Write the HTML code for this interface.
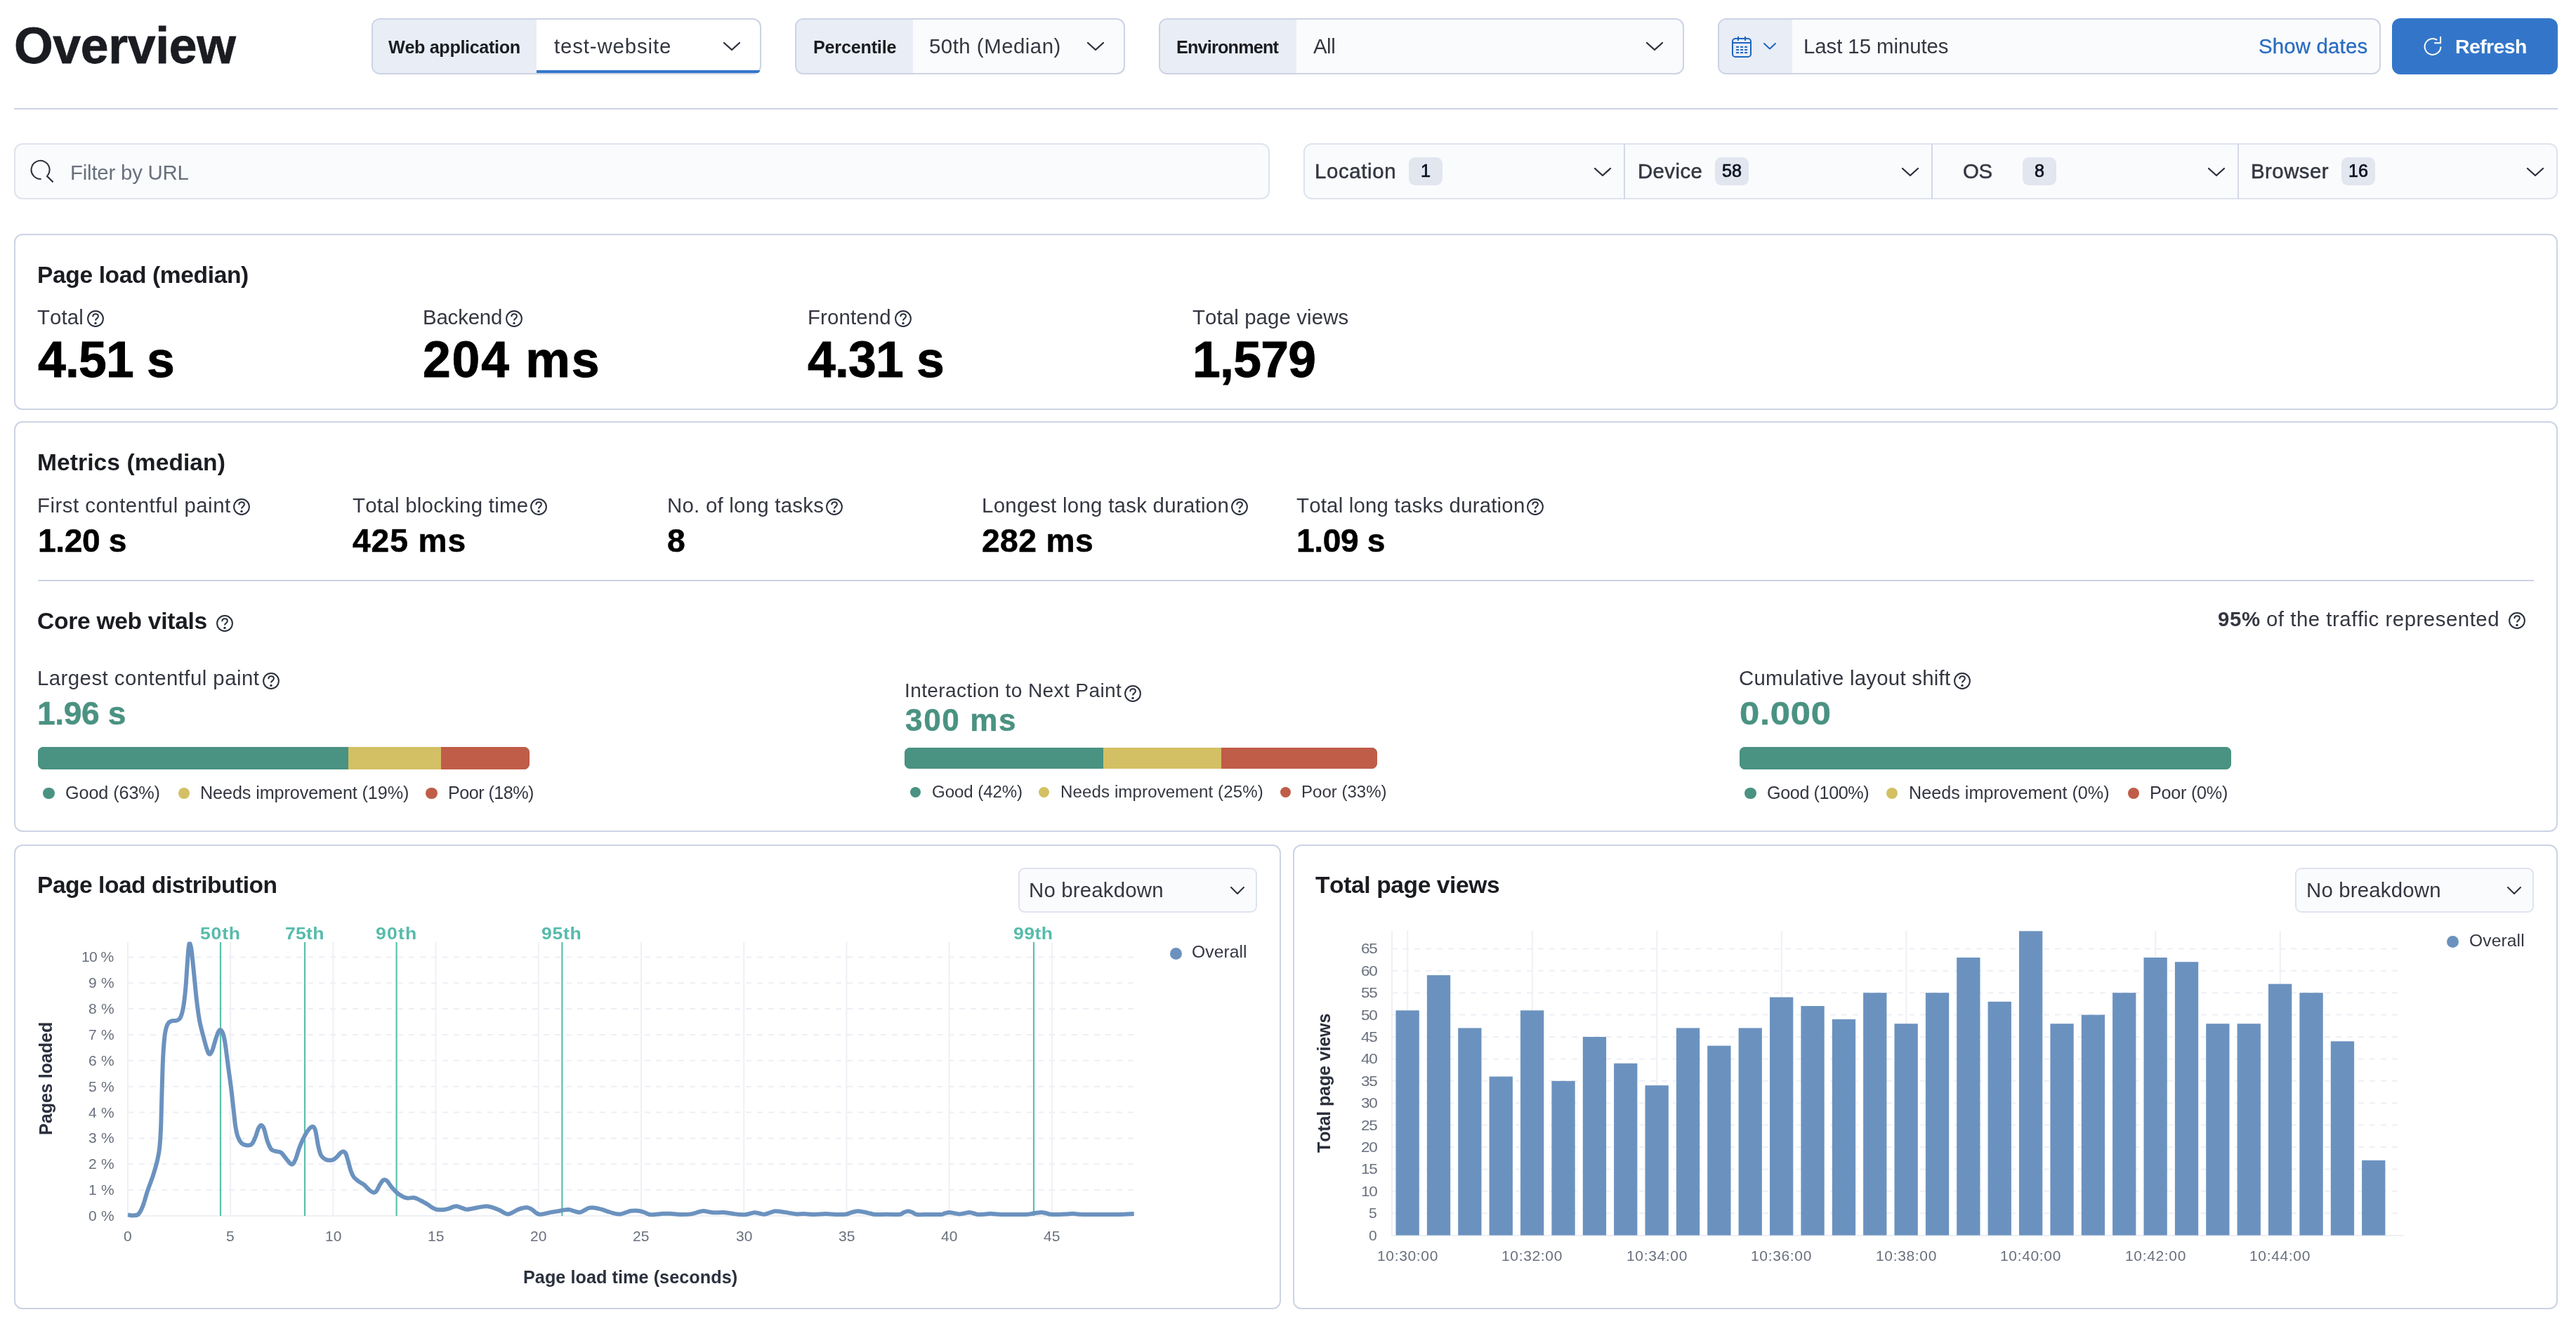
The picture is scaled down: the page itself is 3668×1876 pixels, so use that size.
<!DOCTYPE html>
<html><head><meta charset="utf-8"><title>Overview</title>
<style>
html,body{margin:0;padding:0;background:#fff;}
body{width:3668px;height:1876px;position:relative;overflow:hidden;font-family:"Liberation Sans",sans-serif;}
.t{position:absolute;white-space:nowrap;line-height:1;font-kerning:none;will-change:transform;}
.b{position:absolute;box-sizing:border-box;}
</style></head><body>
<div class="t" style="left:19.8px;top:29.5px;font-size:71.5px;color:#1a1c21;font-weight:700;letter-spacing:-0.29px;-webkit-text-stroke:0.8px #1a1c21;">Overview</div>
<div class="b" style="left:529px;top:26px;width:555px;height:80px;background:#fff;border:2px solid #ccd3e5;border-radius:12px;"></div>
<div class="b" style="left:531px;top:28px;width:233px;height:76px;background:#e9edf6;border-radius:10px 0 0 10px;"></div>
<div class="t" style="left:552.8px;top:54.7px;font-size:25.2px;color:#1a1c21;font-weight:700;letter-spacing:-0.36px;">Web application</div>
<div class="t" style="left:788.8px;top:51.1px;font-size:29.4px;color:#343741;letter-spacing:0.87px;">test-website</div>
<svg class="b" style="left:1028px;top:58px;" width="28" height="16" viewBox="0 0 28 16"><path d="M3 3 L14 13 L25 3" fill="none" stroke="#2b2f3b" stroke-width="2.3" stroke-linecap="round" stroke-linejoin="round"/></svg>
<div class="b" style="left:764px;top:100px;width:318px;height:4px;background:#3376c9;border-radius:0 0 10px 0;"></div>
<div class="b" style="left:1132px;top:26px;width:470px;height:80px;background:#fafbfd;border:2px solid #ccd3e5;border-radius:12px;"></div>
<div class="b" style="left:1134px;top:28px;width:166px;height:76px;background:#e9edf6;border-radius:10px 0 0 10px;"></div>
<div class="t" style="left:1157.8px;top:54.7px;font-size:25.2px;color:#1a1c21;font-weight:700;letter-spacing:-0.22px;">Percentile</div>
<div class="t" style="left:1322.8px;top:51.1px;font-size:29.4px;color:#343741;letter-spacing:0.50px;">50th (Median)</div>
<svg class="b" style="left:1546px;top:58px;" width="28" height="16" viewBox="0 0 28 16"><path d="M3 3 L14 13 L25 3" fill="none" stroke="#2b2f3b" stroke-width="2.3" stroke-linecap="round" stroke-linejoin="round"/></svg>
<div class="b" style="left:1650px;top:26px;width:748px;height:80px;background:#fafbfd;border:2px solid #ccd3e5;border-radius:12px;"></div>
<div class="b" style="left:1652px;top:28px;width:194px;height:76px;background:#e9edf6;border-radius:10px 0 0 10px;"></div>
<div class="t" style="left:1674.8px;top:54.7px;font-size:25.2px;color:#1a1c21;font-weight:700;letter-spacing:-0.80px;">Environment</div>
<div class="t" style="left:1869.8px;top:51.1px;font-size:29.4px;color:#343741;letter-spacing:-0.50px;">All</div>
<svg class="b" style="left:2342px;top:58px;" width="28" height="16" viewBox="0 0 28 16"><path d="M3 3 L14 13 L25 3" fill="none" stroke="#2b2f3b" stroke-width="2.3" stroke-linecap="round" stroke-linejoin="round"/></svg>
<div class="b" style="left:2446px;top:26px;width:944px;height:80px;background:#fafbfd;border:2px solid #ccd3e5;border-radius:12px;"></div>
<div class="b" style="left:2448px;top:28px;width:104px;height:76px;background:#e9edf6;border-radius:10px 0 0 10px;"></div>
<svg class="b" style="left:2466px;top:52px;" width="28" height="30" viewBox="0 0 28 30"><rect x="1" y="3" width="26" height="26" rx="4" fill="none" stroke="#1d66bf" stroke-width="2"/><path d="M1 9 H27" stroke="#1d66bf" stroke-width="2"/><path d="M9 0 V6 M19 0 V6" stroke="#1d66bf" stroke-width="2"/><rect x="6.1" y="13.90" width="4" height="2" fill="#1d66bf"/><rect x="12.1" y="13.90" width="4" height="2" fill="#1d66bf"/><rect x="18.1" y="13.90" width="4" height="2" fill="#1d66bf"/><rect x="6.1" y="17.95" width="4" height="2" fill="#1d66bf"/><rect x="12.1" y="17.95" width="4" height="2" fill="#1d66bf"/><rect x="18.1" y="17.95" width="4" height="2" fill="#1d66bf"/><rect x="6.1" y="22.00" width="4" height="2" fill="#1d66bf"/><rect x="12.1" y="22.00" width="4" height="2" fill="#1d66bf"/><rect x="18.1" y="22.00" width="4" height="2" fill="#1d66bf"/></svg>
<svg class="b" style="left:2509px;top:59.3px;" width="22" height="13.4" viewBox="0 0 22 13.4"><path d="M3 3 L11 10.4 L19 3" fill="none" stroke="#1d66bf" stroke-width="2" stroke-linecap="round" stroke-linejoin="round"/></svg>
<div class="t" style="left:2567.8px;top:51.1px;font-size:29.4px;color:#343741;letter-spacing:-0.07px;">Last 15 minutes</div>
<div class="t" style="left:3216.3px;top:51.1px;font-size:29.4px;color:#2a6cc0;letter-spacing:0.17px;-webkit-text-stroke:0.3px #2a6cc0;">Show dates</div>
<div class="b" style="left:3406px;top:26px;width:236px;height:80px;background:#3376c9;border-radius:12px;"></div>
<svg class="b" style="left:3451px;top:52px;" width="28" height="28" viewBox="0 0 28 28"><path d="M24.4 14.5 A11.4 11.4 0 1 1 19.3 5" fill="none" stroke="#fff" stroke-width="2"/><path d="M24.1 0 V9.3 H15.1" fill="none" stroke="#fff" stroke-width="2"/></svg>
<div class="t" style="left:3496.3px;top:51.7px;font-size:28.4px;color:#fff;font-weight:700;letter-spacing:-0.58px;">Refresh</div>
<div class="b" style="left:20px;top:154px;width:3622px;height:2px;background:#ccd3e5;"></div>
<div class="b" style="left:20px;top:204px;width:1788px;height:80px;background:#fafbfd;border:2px solid #dfe3ef;border-radius:12px;"></div>
<svg class="b" style="left:43px;top:227px;" width="36" height="36" viewBox="0 0 36 36"><path d="M15.6 27.9 A13 13 0 1 1 24.6 23.2" fill="none" stroke="#2b2f3b" stroke-width="2"/><path d="M23.3 23.2 L32.6 32.5" fill="none" stroke="#2b2f3b" stroke-width="2.2"/></svg>
<div class="t" style="left:100.3px;top:230.8px;font-size:29.4px;color:#69707d;letter-spacing:-0.21px;">Filter by URL</div>
<div class="b" style="left:1856px;top:204px;width:1786px;height:80px;background:#fafbfd;border:2px solid #dfe3ef;border-radius:12px;"></div>
<div class="b" style="left:2312px;top:204px;width:2px;height:80px;background:#d3d9e8;"></div>
<div class="b" style="left:2750px;top:204px;width:2px;height:80px;background:#d3d9e8;"></div>
<div class="b" style="left:3186px;top:204px;width:2px;height:80px;background:#d3d9e8;"></div>
<div class="t" style="left:1872.4px;top:229.1px;font-size:29.4px;color:#343741;letter-spacing:0.63px;-webkit-text-stroke:0.5px #343741;">Location</div>
<div class="b" style="left:2006px;top:224px;width:48px;height:40px;background:#e1e6ef;border-radius:9px;"></div>
<div class="t" style="left:2022.8px;top:231.1px;font-size:25.2px;color:#07101f;-webkit-text-stroke:0.7px #07101f;">1</div>
<svg class="b" style="left:2268px;top:237px;" width="28" height="16" viewBox="0 0 28 16"><path d="M3 3 L14 13 L25 3" fill="none" stroke="#2b2f3b" stroke-width="2.3" stroke-linecap="round" stroke-linejoin="round"/></svg>
<div class="t" style="left:2332.4px;top:229.1px;font-size:29.4px;color:#343741;letter-spacing:0.40px;-webkit-text-stroke:0.5px #343741;">Device</div>
<div class="b" style="left:2442px;top:224px;width:48px;height:40px;background:#e1e6ef;border-radius:9px;"></div>
<div class="t" style="left:2451.8px;top:231.1px;font-size:25.2px;color:#07101f;-webkit-text-stroke:0.7px #07101f;">58</div>
<svg class="b" style="left:2706px;top:237px;" width="28" height="16" viewBox="0 0 28 16"><path d="M3 3 L14 13 L25 3" fill="none" stroke="#2b2f3b" stroke-width="2.3" stroke-linecap="round" stroke-linejoin="round"/></svg>
<div class="t" style="left:2794.6px;top:229.1px;font-size:29.4px;color:#343741;letter-spacing:-0.30px;-webkit-text-stroke:0.5px #343741;">OS</div>
<div class="b" style="left:2880px;top:224px;width:48px;height:40px;background:#e1e6ef;border-radius:9px;"></div>
<div class="t" style="left:2896.8px;top:231.1px;font-size:25.2px;color:#07101f;-webkit-text-stroke:0.7px #07101f;">8</div>
<svg class="b" style="left:3141.5px;top:237px;" width="28" height="16" viewBox="0 0 28 16"><path d="M3 3 L14 13 L25 3" fill="none" stroke="#2b2f3b" stroke-width="2.3" stroke-linecap="round" stroke-linejoin="round"/></svg>
<div class="t" style="left:3204.8px;top:229.1px;font-size:29.4px;color:#343741;letter-spacing:0.47px;-webkit-text-stroke:0.5px #343741;">Browser</div>
<div class="b" style="left:3334px;top:224px;width:48px;height:40px;background:#e1e6ef;border-radius:9px;"></div>
<div class="t" style="left:3343.8px;top:231.1px;font-size:25.2px;color:#07101f;-webkit-text-stroke:0.7px #07101f;">16</div>
<svg class="b" style="left:3596px;top:237px;" width="28" height="16" viewBox="0 0 28 16"><path d="M3 3 L14 13 L25 3" fill="none" stroke="#2b2f3b" stroke-width="2.3" stroke-linecap="round" stroke-linejoin="round"/></svg>
<div class="b" style="left:20px;top:333px;width:3622px;height:251px;background:#fff;border:2px solid #ccd3e5;border-radius:12px;"></div>
<div class="t" style="left:53.4px;top:374.6px;font-size:33.6px;color:#1a1c21;font-weight:700;letter-spacing:-0.39px;">Page load (median)</div>
<div class="t" style="left:53.4px;top:437.1px;font-size:29.4px;color:#343741;letter-spacing:0.10px;">Total</div>
<svg class="b" style="left:123.0px;top:440.9px;" width="26" height="26" viewBox="0 0 26 26"><circle cx="13" cy="13" r="10.9" fill="none" stroke="#2b303d" stroke-width="2"/><path d="M9.3 10.2 C9.3 7.6 11 6.3 13.1 6.3 C15.3 6.3 16.9 7.7 16.9 9.6 C16.9 12.6 13 12.6 13 15.6" fill="none" stroke="#2b303d" stroke-width="2" stroke-linecap="butt"/><circle cx="13" cy="19.4" r="1.7" fill="#2b303d"/></svg>
<div class="t" style="left:53.9px;top:476.5px;font-size:71.5px;color:#000;font-weight:700;letter-spacing:-0.80px;-webkit-text-stroke:0.9px #000;">4.51 s</div>
<div class="t" style="left:601.8px;top:437.1px;font-size:29.4px;color:#343741;letter-spacing:-0.17px;">Backend</div>
<svg class="b" style="left:719px;top:440.9px;" width="26" height="26" viewBox="0 0 26 26"><circle cx="13" cy="13" r="10.9" fill="none" stroke="#2b303d" stroke-width="2"/><path d="M9.3 10.2 C9.3 7.6 11 6.3 13.1 6.3 C15.3 6.3 16.9 7.7 16.9 9.6 C16.9 12.6 13 12.6 13 15.6" fill="none" stroke="#2b303d" stroke-width="2" stroke-linecap="butt"/><circle cx="13" cy="19.4" r="1.7" fill="#2b303d"/></svg>
<div class="t" style="left:602.3px;top:476.5px;font-size:71.5px;color:#000;font-weight:700;letter-spacing:1.80px;-webkit-text-stroke:0.9px #000;">204 ms</div>
<div class="t" style="left:1149.8px;top:437.1px;font-size:29.4px;color:#343741;letter-spacing:0.14px;">Frontend</div>
<svg class="b" style="left:1273px;top:440.9px;" width="26" height="26" viewBox="0 0 26 26"><circle cx="13" cy="13" r="10.9" fill="none" stroke="#2b303d" stroke-width="2"/><path d="M9.3 10.2 C9.3 7.6 11 6.3 13.1 6.3 C15.3 6.3 16.9 7.7 16.9 9.6 C16.9 12.6 13 12.6 13 15.6" fill="none" stroke="#2b303d" stroke-width="2" stroke-linecap="butt"/><circle cx="13" cy="19.4" r="1.7" fill="#2b303d"/></svg>
<div class="t" style="left:1150.3px;top:476.5px;font-size:71.5px;color:#000;font-weight:700;letter-spacing:-0.80px;-webkit-text-stroke:0.9px #000;">4.31 s</div>
<div class="t" style="left:1697.8px;top:437.1px;font-size:29.4px;color:#343741;letter-spacing:0.11px;">Total page views</div>
<div class="t" style="left:1698.3px;top:476.5px;font-size:71.5px;color:#000;font-weight:700;letter-spacing:-0.75px;-webkit-text-stroke:0.9px #000;">1,579</div>
<div class="b" style="left:20px;top:600px;width:3622px;height:585px;background:#fff;border:2px solid #ccd3e5;border-radius:12px;"></div>
<div class="t" style="left:53.4px;top:641.6px;font-size:33.6px;color:#1a1c21;font-weight:700;letter-spacing:0.07px;">Metrics (median)</div>
<div class="t" style="left:53.4px;top:705.1px;font-size:29.4px;color:#343741;letter-spacing:0.50px;">First contentful paint</div>
<svg class="b" style="left:331.0px;top:709.4px;" width="26" height="26" viewBox="0 0 26 26"><circle cx="13" cy="13" r="10.9" fill="none" stroke="#2b303d" stroke-width="2"/><path d="M9.3 10.2 C9.3 7.6 11 6.3 13.1 6.3 C15.3 6.3 16.9 7.7 16.9 9.6 C16.9 12.6 13 12.6 13 15.6" fill="none" stroke="#2b303d" stroke-width="2" stroke-linecap="butt"/><circle cx="13" cy="19.4" r="1.7" fill="#2b303d"/></svg>
<div class="t" style="left:53.9px;top:746.6px;font-size:46.2px;color:#000;font-weight:700;letter-spacing:-0.40px;-webkit-text-stroke:0.5px #000;">1.20 s</div>
<div class="t" style="left:501.8px;top:705.1px;font-size:29.4px;color:#343741;letter-spacing:0.28px;">Total blocking time</div>
<svg class="b" style="left:754px;top:709.4px;" width="26" height="26" viewBox="0 0 26 26"><circle cx="13" cy="13" r="10.9" fill="none" stroke="#2b303d" stroke-width="2"/><path d="M9.3 10.2 C9.3 7.6 11 6.3 13.1 6.3 C15.3 6.3 16.9 7.7 16.9 9.6 C16.9 12.6 13 12.6 13 15.6" fill="none" stroke="#2b303d" stroke-width="2" stroke-linecap="butt"/><circle cx="13" cy="19.4" r="1.7" fill="#2b303d"/></svg>
<div class="t" style="left:502.3px;top:746.6px;font-size:46.2px;color:#000;font-weight:700;letter-spacing:0.90px;-webkit-text-stroke:0.5px #000;">425 ms</div>
<div class="t" style="left:949.8px;top:705.1px;font-size:29.4px;color:#343741;letter-spacing:0.25px;">No. of long tasks</div>
<svg class="b" style="left:1175px;top:709.4px;" width="26" height="26" viewBox="0 0 26 26"><circle cx="13" cy="13" r="10.9" fill="none" stroke="#2b303d" stroke-width="2"/><path d="M9.3 10.2 C9.3 7.6 11 6.3 13.1 6.3 C15.3 6.3 16.9 7.7 16.9 9.6 C16.9 12.6 13 12.6 13 15.6" fill="none" stroke="#2b303d" stroke-width="2" stroke-linecap="butt"/><circle cx="13" cy="19.4" r="1.7" fill="#2b303d"/></svg>
<div class="t" style="left:950.3px;top:746.6px;font-size:46.2px;color:#000;font-weight:700;-webkit-text-stroke:0.5px #000;">8</div>
<div class="t" style="left:1397.8px;top:705.1px;font-size:29.4px;color:#343741;letter-spacing:0.28px;">Longest long task duration</div>
<svg class="b" style="left:1752px;top:709.4px;" width="26" height="26" viewBox="0 0 26 26"><circle cx="13" cy="13" r="10.9" fill="none" stroke="#2b303d" stroke-width="2"/><path d="M9.3 10.2 C9.3 7.6 11 6.3 13.1 6.3 C15.3 6.3 16.9 7.7 16.9 9.6 C16.9 12.6 13 12.6 13 15.6" fill="none" stroke="#2b303d" stroke-width="2" stroke-linecap="butt"/><circle cx="13" cy="19.4" r="1.7" fill="#2b303d"/></svg>
<div class="t" style="left:1398.3px;top:746.6px;font-size:46.2px;color:#000;font-weight:700;letter-spacing:0.40px;-webkit-text-stroke:0.5px #000;">282 ms</div>
<div class="t" style="left:1845.8px;top:705.1px;font-size:29.4px;color:#343741;letter-spacing:0.21px;">Total long tasks duration</div>
<svg class="b" style="left:2173px;top:709.4px;" width="26" height="26" viewBox="0 0 26 26"><circle cx="13" cy="13" r="10.9" fill="none" stroke="#2b303d" stroke-width="2"/><path d="M9.3 10.2 C9.3 7.6 11 6.3 13.1 6.3 C15.3 6.3 16.9 7.7 16.9 9.6 C16.9 12.6 13 12.6 13 15.6" fill="none" stroke="#2b303d" stroke-width="2" stroke-linecap="butt"/><circle cx="13" cy="19.4" r="1.7" fill="#2b303d"/></svg>
<div class="t" style="left:1846.3px;top:746.6px;font-size:46.2px;color:#000;font-weight:700;letter-spacing:-0.40px;-webkit-text-stroke:0.5px #000;">1.09 s</div>
<div class="b" style="left:54px;top:826px;width:3554px;height:2px;background:#ccd3e5;"></div>
<div class="t" style="left:53.4px;top:867.6px;font-size:33.6px;color:#1a1c21;font-weight:700;letter-spacing:-0.29px;">Core web vitals</div>
<svg class="b" style="left:307px;top:874.5px;" width="26" height="26" viewBox="0 0 26 26"><circle cx="13" cy="13" r="10.9" fill="none" stroke="#2b303d" stroke-width="2"/><path d="M9.3 10.2 C9.3 7.6 11 6.3 13.1 6.3 C15.3 6.3 16.9 7.7 16.9 9.6 C16.9 12.6 13 12.6 13 15.6" fill="none" stroke="#2b303d" stroke-width="2" stroke-linecap="butt"/><circle cx="13" cy="19.4" r="1.7" fill="#2b303d"/></svg>
<div class="t" style="left:3157.5px;top:867.1px;font-size:29.4px;color:#343741;font-weight:700;letter-spacing:0.65px;">95%</div>
<div class="t" style="left:3226.8px;top:867.1px;font-size:29.4px;color:#343741;letter-spacing:0.52px;">of the traffic represented</div>
<svg class="b" style="left:3571px;top:870.7px;" width="26" height="26" viewBox="0 0 26 26"><circle cx="13" cy="13" r="10.9" fill="none" stroke="#2b303d" stroke-width="2"/><path d="M9.3 10.2 C9.3 7.6 11 6.3 13.1 6.3 C15.3 6.3 16.9 7.7 16.9 9.6 C16.9 12.6 13 12.6 13 15.6" fill="none" stroke="#2b303d" stroke-width="2" stroke-linecap="butt"/><circle cx="13" cy="19.4" r="1.7" fill="#2b303d"/></svg>
<div class="t" style="left:53.4px;top:950.8px;font-size:29.4px;color:#343741;letter-spacing:0.45px;">Largest contentful paint</div>
<svg class="b" style="left:373.0px;top:956.9000000000001px;" width="26" height="26" viewBox="0 0 26 26"><circle cx="13" cy="13" r="10.9" fill="none" stroke="#2b303d" stroke-width="2"/><path d="M9.3 10.2 C9.3 7.6 11 6.3 13.1 6.3 C15.3 6.3 16.9 7.7 16.9 9.6 C16.9 12.6 13 12.6 13 15.6" fill="none" stroke="#2b303d" stroke-width="2" stroke-linecap="butt"/><circle cx="13" cy="19.4" r="1.7" fill="#2b303d"/></svg>
<div class="t" style="left:53.4px;top:992.7px;font-size:46.2px;color:#4a9282;font-weight:700;letter-spacing:-0.40px;-webkit-text-stroke:0.5px #4a9282;">1.96 s</div>
<div class="b" style="left:53.6px;top:1064px;width:700px;height:32px;border-radius:8px;overflow:hidden;background:#4a9282;"><div class="b" style="left:0.0px;top:0;width:442.1px;height:100%;background:#4a9282"></div><div class="b" style="left:442.1px;top:0;width:132.3px;height:100%;background:#d3c064"></div><div class="b" style="left:574.4px;top:0;width:126.0px;height:100%;background:#bf5d48"></div></div>
<div class="b" style="left:61.4px;top:1121.8px;width:16.500000000000007px;height:16.5px;background:#4a9282;border-radius:10px;"></div>
<div class="t" style="left:93.1px;top:1117.0px;font-size:25.2px;color:#343741;letter-spacing:-0.09px;">Good (63%)</div>
<div class="b" style="left:253.6px;top:1121.8px;width:16.50000000000003px;height:16.5px;background:#d3c064;border-radius:10px;"></div>
<div class="t" style="left:284.5px;top:1117.0px;font-size:25.2px;color:#343741;letter-spacing:-0.10px;">Needs improvement (19%)</div>
<div class="b" style="left:606px;top:1121.8px;width:16.5px;height:16.5px;background:#bf5d48;border-radius:10px;"></div>
<div class="t" style="left:637.8px;top:1117.0px;font-size:25.2px;color:#343741;letter-spacing:-0.56px;">Poor (18%)</div>
<div class="t" style="left:1287.8px;top:969.8px;font-size:28.076999999999998px;color:#343741;letter-spacing:0.39px;">Interaction to Next Paint</div>
<svg class="b" style="left:1600.4px;top:974.8000000000001px;" width="26" height="26" viewBox="0 0 26 26"><circle cx="13" cy="13" r="10.9" fill="none" stroke="#2b303d" stroke-width="2"/><path d="M9.3 10.2 C9.3 7.6 11 6.3 13.1 6.3 C15.3 6.3 16.9 7.7 16.9 9.6 C16.9 12.6 13 12.6 13 15.6" fill="none" stroke="#2b303d" stroke-width="2" stroke-linecap="butt"/><circle cx="13" cy="19.4" r="1.7" fill="#2b303d"/></svg>
<div class="t" style="left:1288.8px;top:1003.7px;font-size:44.121px;color:#4a9282;font-weight:700;letter-spacing:1.60px;-webkit-text-stroke:0.5px #4a9282;">300 ms</div>
<div class="b" style="left:1288px;top:1064.5px;width:673px;height:30.5px;border-radius:8px;overflow:hidden;background:#4a9282;"><div class="b" style="left:0.0px;top:0;width:283.0px;height:100%;background:#4a9282"></div><div class="b" style="left:283.0px;top:0;width:168.0px;height:100%;background:#d3c064"></div><div class="b" style="left:451.0px;top:0;width:222.0px;height:100%;background:#bf5d48"></div></div>
<div class="b" style="left:1296px;top:1120.5px;width:15.299999999999955px;height:15.200000000000045px;background:#4a9282;border-radius:10px;"></div>
<div class="t" style="left:1326.7px;top:1115.9px;font-size:24.066px;color:#343741;letter-spacing:-0.06px;">Good (42%)</div>
<div class="b" style="left:1479px;top:1120.5px;width:15.299999999999955px;height:15.200000000000045px;background:#d3c064;border-radius:10px;"></div>
<div class="t" style="left:1510.2px;top:1115.9px;font-size:24.066px;color:#343741;letter-spacing:0.12px;">Needs improvement (25%)</div>
<div class="b" style="left:1822.5px;top:1120.5px;width:15.299999999999955px;height:15.200000000000045px;background:#bf5d48;border-radius:10px;"></div>
<div class="t" style="left:1852.8px;top:1115.9px;font-size:24.066px;color:#343741;">Poor (33%)</div>
<div class="t" style="left:2476.3px;top:950.8px;font-size:29.4px;color:#343741;letter-spacing:0.25px;">Cumulative layout shift</div>
<svg class="b" style="left:2781.0px;top:956.9000000000001px;" width="26" height="26" viewBox="0 0 26 26"><circle cx="13" cy="13" r="10.9" fill="none" stroke="#2b303d" stroke-width="2"/><path d="M9.3 10.2 C9.3 7.6 11 6.3 13.1 6.3 C15.3 6.3 16.9 7.7 16.9 9.6 C16.9 12.6 13 12.6 13 15.6" fill="none" stroke="#2b303d" stroke-width="2" stroke-linecap="butt"/><circle cx="13" cy="19.4" r="1.7" fill="#2b303d"/></svg>
<div class="t" style="left:2477.3px;top:992.7px;font-size:46.2px;color:#4a9282;font-weight:700;letter-spacing:0.66px;-webkit-text-stroke:0.5px #4a9282;transform-origin:0 50%;transform:scaleX(1.1);">0.000</div>
<div class="b" style="left:2476.5px;top:1064px;width:700px;height:32px;border-radius:8px;overflow:hidden;background:#4a9282;"><div class="b" style="left:0.0px;top:0;width:700.0px;height:100%;background:#4a9282"></div></div>
<div class="b" style="left:2484px;top:1121.8px;width:16.5px;height:16.5px;background:#4a9282;border-radius:10px;"></div>
<div class="t" style="left:2516.3px;top:1117.0px;font-size:25.2px;color:#343741;letter-spacing:-0.41px;">Good (100%)</div>
<div class="b" style="left:2685.7px;top:1121.8px;width:16.5px;height:16.5px;background:#d3c064;border-radius:10px;"></div>
<div class="t" style="left:2718.4px;top:1117.0px;font-size:25.2px;color:#343741;">Needs improvement (0%)</div>
<div class="b" style="left:3029.6px;top:1121.8px;width:16.5px;height:16.5px;background:#bf5d48;border-radius:10px;"></div>
<div class="t" style="left:3060.8px;top:1117.0px;font-size:25.2px;color:#343741;letter-spacing:-0.25px;">Poor (0%)</div>
<div class="b" style="left:20px;top:1203px;width:1804px;height:662px;background:#fff;border:2px solid #ccd3e5;border-radius:12px;"></div>
<div class="t" style="left:53.4px;top:1243.6px;font-size:33.6px;color:#1a1c21;font-weight:700;letter-spacing:-0.50px;">Page load distribution</div>
<div class="b" style="left:1450px;top:1236px;width:340px;height:64px;background:#fafbfd;border:2px solid #dfe3ef;border-radius:9px;"></div>
<div class="t" style="left:1464.8px;top:1252.8px;font-size:29.4px;color:#343741;letter-spacing:0.18px;">No breakdown</div>
<svg class="b" style="left:1750px;top:1260.7px;" width="24" height="15.0" viewBox="0 0 24 15.0"><path d="M3 3 L12 12.0 L21 3" fill="none" stroke="#2b2f3b" stroke-width="2" stroke-linecap="round" stroke-linejoin="round"/></svg>
<svg class="b" style="left:0;top:0" width="1830" height="1876" viewBox="0 0 1830 1876"><path d="M182 1695.1 H1615" stroke="#eeeff5" stroke-width="2" stroke-dasharray="8 8"/><path d="M182 1658.3 H1615" stroke="#eeeff5" stroke-width="2" stroke-dasharray="8 8"/><path d="M182 1621.4 H1615" stroke="#eeeff5" stroke-width="2" stroke-dasharray="8 8"/><path d="M182 1584.6 H1615" stroke="#eeeff5" stroke-width="2" stroke-dasharray="8 8"/><path d="M182 1547.7 H1615" stroke="#eeeff5" stroke-width="2" stroke-dasharray="8 8"/><path d="M182 1510.8 H1615" stroke="#eeeff5" stroke-width="2" stroke-dasharray="8 8"/><path d="M182 1474.0 H1615" stroke="#eeeff5" stroke-width="2" stroke-dasharray="8 8"/><path d="M182 1437.1 H1615" stroke="#eeeff5" stroke-width="2" stroke-dasharray="8 8"/><path d="M182 1400.3 H1615" stroke="#eeeff5" stroke-width="2" stroke-dasharray="8 8"/><path d="M182 1363.4 H1615" stroke="#eeeff5" stroke-width="2" stroke-dasharray="8 8"/><path d="M182.0 1342 V1732" stroke="#eef0f5" stroke-width="2"/><path d="M328.2 1342 V1732" stroke="#eef0f5" stroke-width="2"/><path d="M474.4 1342 V1732" stroke="#eef0f5" stroke-width="2"/><path d="M620.6 1342 V1732" stroke="#eef0f5" stroke-width="2"/><path d="M766.8 1342 V1732" stroke="#eef0f5" stroke-width="2"/><path d="M913.0 1342 V1732" stroke="#eef0f5" stroke-width="2"/><path d="M1059.2 1342 V1732" stroke="#eef0f5" stroke-width="2"/><path d="M1205.4 1342 V1732" stroke="#eef0f5" stroke-width="2"/><path d="M1351.6 1342 V1732" stroke="#eef0f5" stroke-width="2"/><path d="M1497.8 1342 V1732" stroke="#eef0f5" stroke-width="2"/><path d="M181 1732 H1615" stroke="#eef0f5" stroke-width="2"/><path d="M314 1342 V1732" stroke="#5cbfae" stroke-width="2.2"/><path d="M434 1342 V1732" stroke="#5cbfae" stroke-width="2.2"/><path d="M564.6 1342 V1732" stroke="#5cbfae" stroke-width="2.2"/><path d="M800.4 1342 V1732" stroke="#5cbfae" stroke-width="2.2"/><path d="M1472 1342 V1732" stroke="#5cbfae" stroke-width="2.2"/><clipPath id="lc"><rect x="180" y="1341.6" width="1440" height="395"/></clipPath><path d="M182.1 1730.4 C183.3 1730.6 186.6 1731.6 189.1 1731.4 C191.6 1731.2 194.7 1731.8 197.1 1729.5 C199.5 1727.2 201.4 1723.1 203.5 1717.7 C205.6 1712.3 207.5 1704.2 209.9 1697.0 C212.3 1689.8 215.5 1682.0 217.9 1674.6 C220.3 1667.1 222.6 1659.2 224.2 1652.3 C225.8 1645.4 226.6 1641.5 227.4 1633.0 C228.2 1624.5 228.8 1614.3 229.3 1601.0 C229.8 1587.7 230.1 1568.9 230.6 1553.0 C231.1 1537.1 231.5 1518.7 232.2 1505.5 C232.9 1492.3 233.7 1481.3 234.8 1473.6 C235.9 1465.8 237.1 1462.2 238.6 1459.0 C240.1 1455.8 241.9 1455.3 244.0 1454.4 C246.1 1453.5 249.3 1454.6 251.4 1453.8 C253.5 1453.0 255.2 1452.8 256.8 1449.7 C258.4 1446.6 259.7 1442.0 260.9 1435.3 C262.1 1428.6 263.2 1419.4 264.1 1409.8 C265.0 1400.2 265.7 1387.5 266.4 1377.9 C267.1 1368.3 267.7 1358.0 268.3 1352.3 C268.9 1346.5 269.5 1343.1 270.2 1343.4 C270.9 1343.7 271.8 1347.1 272.7 1353.9 C273.6 1360.7 274.7 1372.2 275.9 1384.2 C277.1 1396.2 278.7 1414.0 280.1 1425.7 C281.5 1437.4 282.6 1445.9 284.2 1454.4 C285.8 1462.9 287.9 1469.9 289.7 1476.8 C291.5 1483.7 293.6 1491.8 295.1 1495.9 C296.6 1500.1 297.4 1501.7 298.6 1501.7 C299.8 1501.7 301.0 1499.5 302.4 1495.9 C303.8 1492.3 305.8 1484.3 307.2 1480.0 C308.6 1475.7 309.8 1471.9 311.0 1469.8 C312.2 1467.7 313.1 1466.8 314.2 1467.2 C315.3 1467.6 316.3 1468.8 317.4 1472.0 C318.5 1475.2 319.4 1478.6 320.6 1486.3 C321.8 1494.0 323.3 1507.1 324.8 1518.3 C326.3 1529.5 328.2 1542.8 329.5 1553.4 C330.8 1564.0 331.7 1573.5 332.7 1582.0 C333.7 1590.5 334.3 1598.3 335.3 1604.4 C336.3 1610.5 337.1 1614.8 338.5 1618.8 C339.9 1622.8 341.7 1626.2 343.9 1628.3 C346.1 1630.4 349.4 1631.3 351.9 1631.5 C354.4 1631.7 356.9 1631.4 358.9 1629.3 C360.9 1627.2 362.5 1622.4 364.0 1618.8 C365.5 1615.2 366.5 1610.3 367.8 1607.6 C369.1 1604.9 370.4 1602.8 371.7 1602.8 C373.0 1602.8 374.3 1603.9 375.8 1607.6 C377.3 1611.3 378.9 1620.1 380.6 1625.1 C382.4 1630.0 384.2 1634.8 386.3 1637.3 C388.4 1639.8 391.0 1639.3 393.4 1640.1 C395.8 1640.9 398.0 1640.2 400.4 1642.0 C402.8 1643.8 405.2 1647.9 407.7 1650.7 C410.1 1653.5 413.0 1658.3 415.1 1658.6 C417.2 1658.9 418.5 1656.5 420.5 1652.3 C422.5 1648.0 424.6 1638.9 426.9 1633.1 C429.2 1627.2 431.8 1621.5 434.2 1617.2 C436.6 1612.9 439.2 1609.0 441.2 1607.0 C443.2 1605.0 444.7 1604.4 446.0 1605.0 C447.3 1605.6 448.0 1606.1 449.2 1610.8 C450.4 1615.5 452.0 1627.2 453.3 1633.1 C454.6 1638.9 455.5 1642.8 457.2 1645.9 C458.9 1649.0 461.5 1650.4 463.6 1651.6 C465.7 1652.8 468.1 1652.8 470.0 1652.8 C471.9 1652.8 473.3 1652.6 474.9 1651.8 C476.5 1651.0 478.1 1649.5 479.7 1647.9 C481.3 1646.4 483.2 1643.8 484.6 1642.5 C486.1 1641.2 487.1 1640.1 488.4 1640.2 C489.7 1640.3 491.0 1640.5 492.3 1643.1 C493.6 1645.7 494.9 1651.3 496.2 1655.7 C497.5 1660.1 498.8 1665.8 500.1 1669.3 C501.4 1672.8 502.2 1674.7 504.0 1677.0 C505.8 1679.3 508.4 1681.1 510.8 1682.9 C513.2 1684.7 515.9 1685.6 518.5 1687.7 C521.1 1689.8 524.0 1693.7 526.3 1695.5 C528.6 1697.3 530.5 1698.6 532.1 1698.8 C533.7 1699.0 534.5 1698.3 536.0 1696.5 C537.5 1694.7 539.3 1690.1 540.8 1687.7 C542.2 1685.3 543.6 1683.1 544.7 1681.9 C545.8 1680.7 546.5 1680.4 547.6 1680.5 C548.7 1680.6 549.9 1680.8 551.5 1682.5 C553.1 1684.2 555.1 1687.9 557.3 1690.6 C559.5 1693.2 562.1 1696.1 564.7 1698.4 C567.3 1700.7 570.4 1702.8 572.9 1704.2 C575.4 1705.6 576.8 1706.3 579.7 1706.6 C582.6 1706.9 587.2 1705.7 590.3 1706.2 C593.4 1706.7 595.2 1708.2 598.1 1709.7 C601.0 1711.2 604.9 1713.2 607.8 1714.9 C610.7 1716.6 613.2 1718.8 615.6 1720.1 C618.0 1721.4 619.8 1722.5 622.4 1723.0 C625.0 1723.5 628.4 1723.4 631.1 1723.2 C633.9 1723.0 636.5 1722.4 638.9 1721.7 C641.3 1721.0 643.8 1719.4 645.7 1718.8 C647.6 1718.2 648.7 1718.0 650.5 1718.2 C652.3 1718.4 654.0 1719.3 656.3 1720.1 C658.6 1720.8 661.5 1722.4 664.1 1722.7 C666.7 1723.0 668.7 1722.2 671.9 1721.7 C675.1 1721.2 680.0 1720.0 683.5 1719.4 C687.0 1718.8 690.3 1718.1 693.2 1718.2 C696.1 1718.3 698.1 1718.9 701.0 1719.8 C703.9 1720.7 707.8 1722.2 710.7 1723.6 C713.6 1724.9 716.3 1726.9 718.4 1727.9 C720.5 1728.9 721.5 1729.6 723.3 1729.5 C725.1 1729.4 726.8 1728.5 729.1 1727.5 C731.4 1726.5 734.3 1724.3 736.9 1723.2 C739.5 1722.1 742.2 1721.2 744.6 1720.7 C747.0 1720.2 749.3 1719.8 751.4 1720.1 C753.5 1720.4 755.3 1721.5 757.3 1722.7 C759.2 1723.9 761.3 1726.3 763.1 1727.5 C764.9 1728.7 766.0 1729.5 767.9 1729.8 C769.8 1730.1 772.0 1729.6 774.7 1729.1 C777.5 1728.6 780.2 1727.7 784.4 1726.9 C788.6 1726.1 795.8 1724.9 800.0 1724.2 C804.2 1723.5 806.8 1722.7 809.7 1722.9 C812.6 1723.1 814.8 1724.5 817.4 1725.2 C820.0 1725.9 822.9 1727.2 825.2 1727.1 C827.5 1727.0 828.7 1725.7 831.0 1724.6 C833.3 1723.5 836.2 1721.4 838.8 1720.7 C841.4 1720.0 843.6 1720.2 846.5 1720.5 C849.4 1720.8 852.7 1721.7 856.3 1722.7 C859.9 1723.7 864.3 1725.4 867.9 1726.5 C871.5 1727.6 875.0 1728.6 877.6 1729.1 C880.2 1729.6 881.1 1729.8 883.4 1729.5 C885.7 1729.2 888.6 1727.9 891.2 1727.1 C893.8 1726.3 896.0 1725.2 899.0 1724.8 C902.0 1724.4 906.0 1724.4 908.9 1724.7 C911.8 1725.0 913.5 1725.6 916.2 1726.5 C918.9 1727.4 922.4 1729.4 925.1 1730.0 C927.8 1730.6 929.3 1730.2 932.5 1730.0 C935.7 1729.8 940.6 1729.0 944.3 1728.8 C948.0 1728.6 950.7 1728.6 954.6 1728.8 C958.5 1729.0 963.0 1729.9 967.9 1730.0 C972.8 1730.1 979.7 1730.0 984.1 1729.4 C988.5 1728.8 991.5 1727.2 994.4 1726.5 C997.3 1725.8 999.1 1725.0 1001.8 1725.0 C1004.5 1725.0 1007.9 1726.1 1010.6 1726.5 C1013.3 1726.9 1014.8 1727.2 1018.0 1727.3 C1021.2 1727.4 1025.9 1726.8 1029.8 1727.0 C1033.7 1727.2 1037.9 1728.0 1041.6 1728.5 C1045.3 1729.0 1048.5 1729.8 1052.0 1730.0 C1055.5 1730.2 1058.6 1730.5 1062.3 1730.0 C1066.0 1729.5 1070.9 1727.5 1074.1 1727.3 C1077.3 1727.0 1079.0 1728.1 1081.5 1728.5 C1084.0 1728.9 1086.3 1729.9 1088.8 1729.7 C1091.2 1729.5 1093.7 1728.0 1096.2 1727.3 C1098.7 1726.6 1100.9 1725.5 1103.6 1725.3 C1106.3 1725.1 1109.0 1725.5 1112.4 1725.9 C1115.9 1726.3 1120.6 1727.3 1124.3 1727.9 C1128.0 1728.5 1131.2 1729.2 1134.6 1729.4 C1138.0 1729.6 1140.7 1729.0 1144.9 1729.1 C1149.1 1729.2 1154.5 1730.0 1159.7 1730.0 C1164.9 1730.0 1171.0 1729.1 1175.9 1729.1 C1180.8 1729.1 1184.5 1729.9 1189.2 1730.0 C1193.9 1730.1 1200.0 1730.2 1203.9 1729.7 C1207.8 1729.2 1209.8 1727.7 1212.8 1727.0 C1215.8 1726.3 1218.6 1725.4 1221.6 1725.3 C1224.5 1725.2 1227.5 1726.0 1230.5 1726.5 C1233.5 1727.0 1236.6 1727.9 1239.3 1728.5 C1242.0 1729.1 1242.8 1729.8 1246.7 1730.0 C1250.6 1730.2 1257.2 1729.7 1262.9 1729.7 C1268.6 1729.7 1276.7 1730.4 1280.6 1730.0 C1284.5 1729.6 1284.4 1728.1 1286.5 1727.3 C1288.6 1726.5 1290.8 1725.3 1293.0 1725.3 C1295.2 1725.3 1297.7 1726.5 1299.8 1727.3 C1301.9 1728.1 1302.0 1729.5 1305.7 1730.0 C1309.4 1730.5 1316.3 1730.0 1322.0 1730.0 C1327.7 1730.0 1335.8 1730.3 1339.7 1730.0 C1343.6 1729.7 1343.6 1728.7 1345.6 1728.2 C1347.6 1727.7 1349.3 1727.0 1351.5 1727.0 C1353.7 1727.0 1356.3 1727.8 1358.8 1728.2 C1361.2 1728.6 1363.7 1729.4 1366.2 1729.4 C1368.7 1729.4 1371.2 1728.6 1373.6 1728.2 C1376.0 1727.8 1378.2 1727.0 1380.4 1727.0 C1382.6 1727.0 1384.8 1728.0 1386.9 1728.5 C1389.0 1729.0 1390.3 1729.8 1392.8 1730.0 C1395.2 1730.2 1398.6 1729.9 1401.6 1729.7 C1404.5 1729.5 1407.0 1728.8 1410.5 1728.8 C1414.0 1728.8 1416.4 1729.5 1422.3 1729.7 C1428.2 1729.9 1439.0 1730.0 1445.9 1730.0 C1452.8 1730.0 1459.2 1730.0 1463.6 1729.7 C1468.0 1729.4 1469.2 1728.7 1472.4 1728.2 C1475.6 1727.8 1479.8 1727.0 1482.8 1727.0 C1485.8 1727.0 1487.9 1727.8 1490.1 1728.2 C1492.3 1728.7 1493.0 1729.4 1496.0 1729.7 C1499.0 1730.0 1503.8 1730.0 1507.8 1730.0 C1511.8 1730.0 1516.2 1729.6 1519.7 1729.4 C1523.2 1729.2 1525.5 1728.8 1528.5 1728.8 C1531.5 1728.8 1531.5 1729.5 1537.4 1729.7 C1543.3 1729.9 1554.6 1730.0 1563.9 1730.0 C1573.2 1730.0 1584.9 1730.2 1593.4 1730.0 C1601.9 1729.8 1611.2 1729.2 1614.7 1729.1" clip-path="url(#lc)" fill="none" stroke="#6b92bf" stroke-width="6" stroke-linejoin="round" stroke-linecap="butt"/></svg>
<div class="t" style="left:126.0px;top:1720.9px;font-size:21px;color:#69707d;letter-spacing:0.25px;">0 %</div>
<div class="t" style="left:126.0px;top:1684.1px;font-size:21px;color:#69707d;letter-spacing:0.25px;">1 %</div>
<div class="t" style="left:126.0px;top:1647.2px;font-size:21px;color:#69707d;letter-spacing:0.25px;">2 %</div>
<div class="t" style="left:126.0px;top:1610.3px;font-size:21px;color:#69707d;letter-spacing:0.25px;">3 %</div>
<div class="t" style="left:126.0px;top:1573.5px;font-size:21px;color:#69707d;letter-spacing:0.25px;">4 %</div>
<div class="t" style="left:126.0px;top:1536.6px;font-size:21px;color:#69707d;letter-spacing:0.25px;">5 %</div>
<div class="t" style="left:126.0px;top:1499.8px;font-size:21px;color:#69707d;letter-spacing:0.25px;">6 %</div>
<div class="t" style="left:126.0px;top:1462.9px;font-size:21px;color:#69707d;letter-spacing:0.25px;">7 %</div>
<div class="t" style="left:126.0px;top:1426.0px;font-size:21px;color:#69707d;letter-spacing:0.25px;">8 %</div>
<div class="t" style="left:126.0px;top:1389.2px;font-size:21px;color:#69707d;letter-spacing:0.25px;">9 %</div>
<div class="t" style="left:116.3px;top:1352.3px;font-size:21px;color:#69707d;letter-spacing:-0.60px;">10 %</div>
<div class="t" style="left:175.8px;top:1749.8px;font-size:21px;color:#69707d;">0</div>
<div class="t" style="left:322.0px;top:1749.8px;font-size:21px;color:#69707d;">5</div>
<div class="t" style="left:462.7px;top:1749.8px;font-size:21px;color:#69707d;">10</div>
<div class="t" style="left:608.9px;top:1749.8px;font-size:21px;color:#69707d;">15</div>
<div class="t" style="left:755.1px;top:1749.8px;font-size:21px;color:#69707d;">20</div>
<div class="t" style="left:901.3px;top:1749.8px;font-size:21px;color:#69707d;">25</div>
<div class="t" style="left:1047.5px;top:1749.8px;font-size:21px;color:#69707d;">30</div>
<div class="t" style="left:1193.7px;top:1749.8px;font-size:21px;color:#69707d;">35</div>
<div class="t" style="left:1339.9px;top:1749.8px;font-size:21px;color:#69707d;">40</div>
<div class="t" style="left:1486.1px;top:1749.8px;font-size:21px;color:#69707d;">45</div>
<div class="t" style="left:285.2px;top:1317.8px;font-size:24.2px;color:#57bbab;font-weight:700;letter-spacing:0.73px;transform-origin:0 50%;transform:scaleX(1.1);">50th</div>
<div class="t" style="left:405.8px;top:1317.8px;font-size:24.2px;color:#57bbab;font-weight:700;letter-spacing:0.21px;transform-origin:0 50%;transform:scaleX(1.1);">75th</div>
<div class="t" style="left:535.2px;top:1317.8px;font-size:24.2px;color:#57bbab;font-weight:700;letter-spacing:1.09px;transform-origin:0 50%;transform:scaleX(1.1);">90th</div>
<div class="t" style="left:771.3px;top:1317.8px;font-size:24.2px;color:#57bbab;font-weight:700;letter-spacing:0.61px;transform-origin:0 50%;transform:scaleX(1.1);">95th</div>
<div class="t" style="left:1442.5px;top:1317.8px;font-size:24.2px;color:#57bbab;font-weight:700;letter-spacing:0.38px;transform-origin:0 50%;transform:scaleX(1.1);">99th</div>
<div class="t" style="left:52.7px;top:1617.0px;font-size:25.2px;color:#2b303d;transform-origin:0 0;transform:rotate(-90deg);letter-spacing:-0.09px;font-weight:700;">Pages loaded</div>
<div class="t" style="left:745.2px;top:1806.9px;font-size:25.2px;color:#2b303d;font-weight:700;letter-spacing:0.06px;">Page load time (seconds)</div>
<div class="b" style="left:1666px;top:1350px;width:16.5px;height:16.5px;background:#6b92bf;border-radius:10px;"></div>
<div class="t" style="left:1696.8px;top:1343.8px;font-size:24.6px;color:#343741;letter-spacing:0.10px;">Overall</div>
<div class="b" style="left:1841px;top:1203px;width:1801px;height:662px;background:#fff;border:2px solid #ccd3e5;border-radius:12px;"></div>
<div class="t" style="left:1872.8px;top:1243.6px;font-size:33.6px;color:#1a1c21;font-weight:700;letter-spacing:-0.40px;">Total page views</div>
<div class="b" style="left:3268px;top:1236px;width:340px;height:64px;background:#fafbfd;border:2px solid #dfe3ef;border-radius:9px;"></div>
<div class="t" style="left:3283.8px;top:1252.8px;font-size:29.4px;color:#343741;letter-spacing:0.18px;">No breakdown</div>
<svg class="b" style="left:3568px;top:1260.7px;" width="24" height="15.0" viewBox="0 0 24 15.0"><path d="M3 3 L12 12.0 L21 3" fill="none" stroke="#2b2f3b" stroke-width="2" stroke-linecap="round" stroke-linejoin="round"/></svg>
<svg class="b" style="left:0;top:0" width="3668" height="1876" viewBox="0 0 3668 1876"><path d="M1982 1728.2 H3422.6" stroke="#eeeff5" stroke-width="2" stroke-dasharray="8 8"/><path d="M1982 1696.8 H3422.6" stroke="#eeeff5" stroke-width="2" stroke-dasharray="8 8"/><path d="M1982 1665.4 H3422.6" stroke="#eeeff5" stroke-width="2" stroke-dasharray="8 8"/><path d="M1982 1634.0 H3422.6" stroke="#eeeff5" stroke-width="2" stroke-dasharray="8 8"/><path d="M1982 1602.6 H3422.6" stroke="#eeeff5" stroke-width="2" stroke-dasharray="8 8"/><path d="M1982 1571.2 H3422.6" stroke="#eeeff5" stroke-width="2" stroke-dasharray="8 8"/><path d="M1982 1539.8 H3422.6" stroke="#eeeff5" stroke-width="2" stroke-dasharray="8 8"/><path d="M1982 1508.4 H3422.6" stroke="#eeeff5" stroke-width="2" stroke-dasharray="8 8"/><path d="M1982 1477.0 H3422.6" stroke="#eeeff5" stroke-width="2" stroke-dasharray="8 8"/><path d="M1982 1445.6 H3422.6" stroke="#eeeff5" stroke-width="2" stroke-dasharray="8 8"/><path d="M1982 1414.2 H3422.6" stroke="#eeeff5" stroke-width="2" stroke-dasharray="8 8"/><path d="M1982 1382.8 H3422.6" stroke="#eeeff5" stroke-width="2" stroke-dasharray="8 8"/><path d="M1982 1351.4 H3422.6" stroke="#eeeff5" stroke-width="2" stroke-dasharray="8 8"/><path d="M2004.3 1326 V1760" stroke="#eef0f5" stroke-width="2"/><path d="M2181.8 1326 V1760" stroke="#eef0f5" stroke-width="2"/><path d="M2359.3 1326 V1760" stroke="#eef0f5" stroke-width="2"/><path d="M2536.8 1326 V1760" stroke="#eef0f5" stroke-width="2"/><path d="M2714.3 1326 V1760" stroke="#eef0f5" stroke-width="2"/><path d="M2891.8 1326 V1760" stroke="#eef0f5" stroke-width="2"/><path d="M3069.3 1326 V1760" stroke="#eef0f5" stroke-width="2"/><path d="M3246.8 1326 V1760" stroke="#eef0f5" stroke-width="2"/><path d="M1982 1326 V1760" stroke="#eef0f5" stroke-width="2"/><path d="M1981 1760 H3422.6" stroke="#eef0f5" stroke-width="2"/><rect x="1987.5" y="1439.3" width="33.3" height="320.3" fill="#6b92bf"/><rect x="2031.9" y="1389.1" width="33.3" height="370.5" fill="#6b92bf"/><rect x="2076.2" y="1464.4" width="33.3" height="295.2" fill="#6b92bf"/><rect x="2120.6" y="1533.5" width="33.3" height="226.1" fill="#6b92bf"/><rect x="2165.0" y="1439.3" width="33.3" height="320.3" fill="#6b92bf"/><rect x="2209.4" y="1539.8" width="33.3" height="219.8" fill="#6b92bf"/><rect x="2253.8" y="1477.0" width="33.3" height="282.6" fill="#6b92bf"/><rect x="2298.1" y="1514.7" width="33.3" height="244.9" fill="#6b92bf"/><rect x="2342.5" y="1546.1" width="33.3" height="213.5" fill="#6b92bf"/><rect x="2386.9" y="1464.4" width="33.3" height="295.2" fill="#6b92bf"/><rect x="2431.2" y="1489.6" width="33.3" height="270.0" fill="#6b92bf"/><rect x="2475.6" y="1464.4" width="33.3" height="295.2" fill="#6b92bf"/><rect x="2520.0" y="1420.5" width="33.3" height="339.1" fill="#6b92bf"/><rect x="2564.4" y="1433.0" width="33.3" height="326.6" fill="#6b92bf"/><rect x="2608.8" y="1451.9" width="33.3" height="307.7" fill="#6b92bf"/><rect x="2653.1" y="1414.2" width="33.3" height="345.4" fill="#6b92bf"/><rect x="2697.5" y="1458.2" width="33.3" height="301.4" fill="#6b92bf"/><rect x="2741.9" y="1414.2" width="33.3" height="345.4" fill="#6b92bf"/><rect x="2786.2" y="1364.0" width="33.3" height="395.6" fill="#6b92bf"/><rect x="2830.6" y="1426.8" width="33.3" height="332.8" fill="#6b92bf"/><rect x="2875.0" y="1326.3" width="33.3" height="433.3" fill="#6b92bf"/><rect x="2919.4" y="1458.2" width="33.3" height="301.4" fill="#6b92bf"/><rect x="2963.8" y="1445.6" width="33.3" height="314.0" fill="#6b92bf"/><rect x="3008.1" y="1414.2" width="33.3" height="345.4" fill="#6b92bf"/><rect x="3052.5" y="1364.0" width="33.3" height="395.6" fill="#6b92bf"/><rect x="3096.9" y="1370.2" width="33.3" height="389.4" fill="#6b92bf"/><rect x="3141.2" y="1458.2" width="33.3" height="301.4" fill="#6b92bf"/><rect x="3185.6" y="1458.2" width="33.3" height="301.4" fill="#6b92bf"/><rect x="3230.0" y="1401.6" width="33.3" height="358.0" fill="#6b92bf"/><rect x="3274.4" y="1414.2" width="33.3" height="345.4" fill="#6b92bf"/><rect x="3318.8" y="1483.3" width="33.3" height="276.3" fill="#6b92bf"/><rect x="3363.1" y="1652.8" width="33.3" height="106.8" fill="#6b92bf"/></svg>
<div class="t" style="left:1949.0px;top:1748.5px;font-size:21px;color:#69707d;">0</div>
<div class="t" style="left:1949.0px;top:1717.1px;font-size:21px;color:#69707d;">5</div>
<div class="t" style="left:1937.7px;top:1685.7px;font-size:21px;color:#69707d;letter-spacing:-1.22px;transform-origin:0 50%;transform:scaleX(1.07);">10</div>
<div class="t" style="left:1937.7px;top:1654.3px;font-size:21px;color:#69707d;letter-spacing:-1.22px;transform-origin:0 50%;transform:scaleX(1.07);">15</div>
<div class="t" style="left:1937.7px;top:1622.9px;font-size:21px;color:#69707d;letter-spacing:-1.22px;transform-origin:0 50%;transform:scaleX(1.07);">20</div>
<div class="t" style="left:1937.7px;top:1591.5px;font-size:21px;color:#69707d;letter-spacing:-1.22px;transform-origin:0 50%;transform:scaleX(1.07);">25</div>
<div class="t" style="left:1937.7px;top:1560.1px;font-size:21px;color:#69707d;letter-spacing:-1.22px;transform-origin:0 50%;transform:scaleX(1.07);">30</div>
<div class="t" style="left:1937.7px;top:1528.7px;font-size:21px;color:#69707d;letter-spacing:-1.22px;transform-origin:0 50%;transform:scaleX(1.07);">35</div>
<div class="t" style="left:1937.7px;top:1497.3px;font-size:21px;color:#69707d;letter-spacing:-1.22px;transform-origin:0 50%;transform:scaleX(1.07);">40</div>
<div class="t" style="left:1937.7px;top:1465.9px;font-size:21px;color:#69707d;letter-spacing:-1.22px;transform-origin:0 50%;transform:scaleX(1.07);">45</div>
<div class="t" style="left:1937.7px;top:1434.5px;font-size:21px;color:#69707d;letter-spacing:-1.22px;transform-origin:0 50%;transform:scaleX(1.07);">50</div>
<div class="t" style="left:1937.7px;top:1403.1px;font-size:21px;color:#69707d;letter-spacing:-1.22px;transform-origin:0 50%;transform:scaleX(1.07);">55</div>
<div class="t" style="left:1937.7px;top:1371.7px;font-size:21px;color:#69707d;letter-spacing:-1.22px;transform-origin:0 50%;transform:scaleX(1.07);">60</div>
<div class="t" style="left:1937.7px;top:1340.3px;font-size:21px;color:#69707d;letter-spacing:-1.22px;transform-origin:0 50%;transform:scaleX(1.07);">65</div>
<div class="t" style="left:1960.8px;top:1778.0px;font-size:21px;color:#69707d;letter-spacing:0.66px;">10:30:00</div>
<div class="t" style="left:2138.3px;top:1778.0px;font-size:21px;color:#69707d;letter-spacing:0.66px;">10:32:00</div>
<div class="t" style="left:2315.8px;top:1778.0px;font-size:21px;color:#69707d;letter-spacing:0.66px;">10:34:00</div>
<div class="t" style="left:2493.3px;top:1778.0px;font-size:21px;color:#69707d;letter-spacing:0.66px;">10:36:00</div>
<div class="t" style="left:2670.8px;top:1778.0px;font-size:21px;color:#69707d;letter-spacing:0.66px;">10:38:00</div>
<div class="t" style="left:2848.3px;top:1778.0px;font-size:21px;color:#69707d;letter-spacing:0.66px;">10:40:00</div>
<div class="t" style="left:3025.8px;top:1778.0px;font-size:21px;color:#69707d;letter-spacing:0.66px;">10:42:00</div>
<div class="t" style="left:3203.3px;top:1778.0px;font-size:21px;color:#69707d;letter-spacing:0.66px;">10:44:00</div>
<div class="t" style="left:1873.0px;top:1642.2px;font-size:25.2px;color:#2b303d;transform-origin:0 0;transform:rotate(-90deg);letter-spacing:-0.21px;font-weight:700;">Total page views</div>
<div class="b" style="left:3484px;top:1333.4px;width:16.5px;height:16.5px;background:#6b92bf;border-radius:10px;"></div>
<div class="t" style="left:3515.8px;top:1327.8px;font-size:24.6px;color:#343741;letter-spacing:0.12px;">Overall</div>
</body></html>
